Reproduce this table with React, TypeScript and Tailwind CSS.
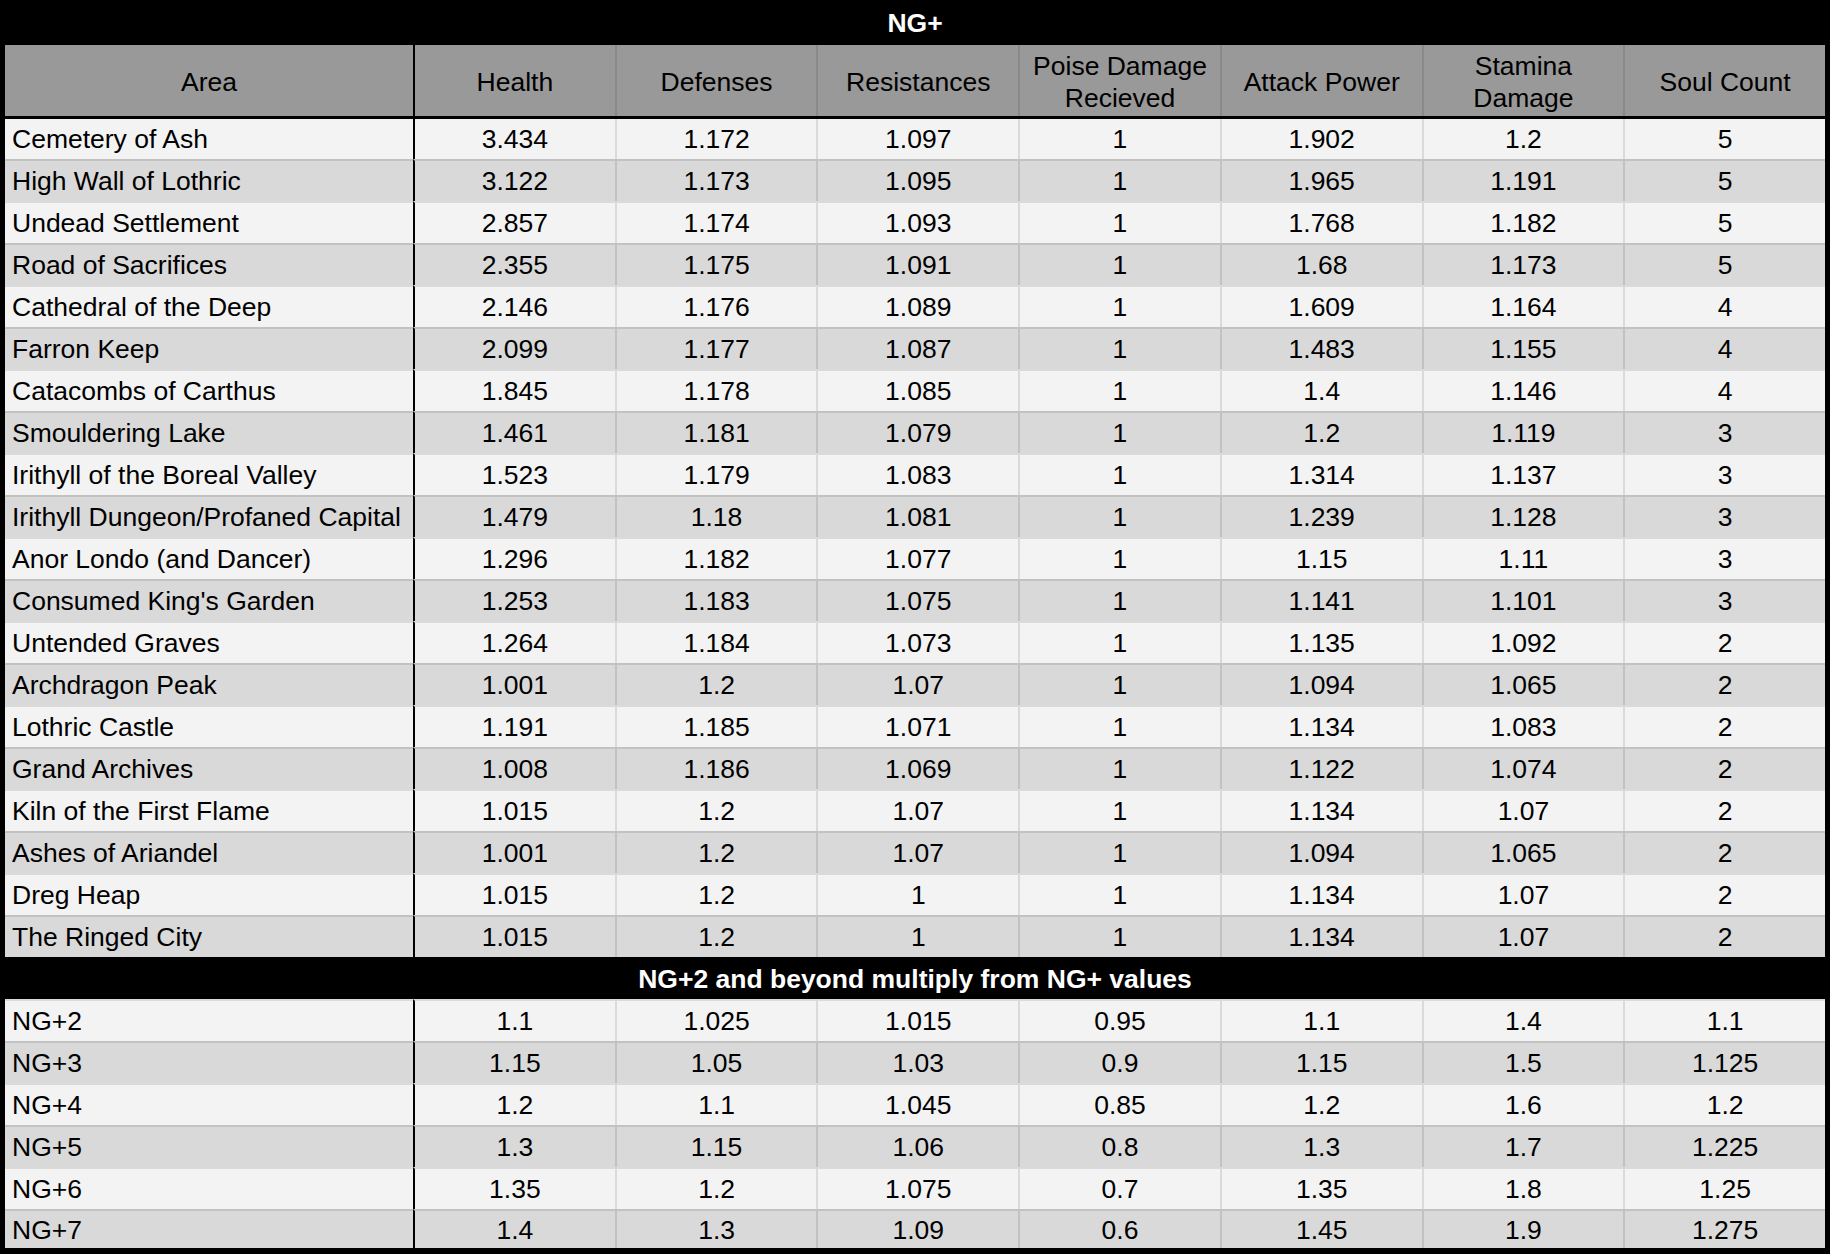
import React from "react";

type Row = [string, string, string, string, string, string, string, string];

const areas: Row[] = [
  ["Cemetery of Ash", "3.434", "1.172", "1.097", "1", "1.902", "1.2", "5"],
  ["High Wall of Lothric", "3.122", "1.173", "1.095", "1", "1.965", "1.191", "5"],
  ["Undead Settlement", "2.857", "1.174", "1.093", "1", "1.768", "1.182", "5"],
  ["Road of Sacrifices", "2.355", "1.175", "1.091", "1", "1.68", "1.173", "5"],
  ["Cathedral of the Deep", "2.146", "1.176", "1.089", "1", "1.609", "1.164", "4"],
  ["Farron Keep", "2.099", "1.177", "1.087", "1", "1.483", "1.155", "4"],
  ["Catacombs of Carthus", "1.845", "1.178", "1.085", "1", "1.4", "1.146", "4"],
  ["Smouldering Lake", "1.461", "1.181", "1.079", "1", "1.2", "1.119", "3"],
  ["Irithyll of the Boreal Valley", "1.523", "1.179", "1.083", "1", "1.314", "1.137", "3"],
  ["Irithyll Dungeon/Profaned Capital", "1.479", "1.18", "1.081", "1", "1.239", "1.128", "3"],
  ["Anor Londo (and Dancer)", "1.296", "1.182", "1.077", "1", "1.15", "1.11", "3"],
  ["Consumed King's Garden", "1.253", "1.183", "1.075", "1", "1.141", "1.101", "3"],
  ["Untended Graves", "1.264", "1.184", "1.073", "1", "1.135", "1.092", "2"],
  ["Archdragon Peak", "1.001", "1.2", "1.07", "1", "1.094", "1.065", "2"],
  ["Lothric Castle", "1.191", "1.185", "1.071", "1", "1.134", "1.083", "2"],
  ["Grand Archives", "1.008", "1.186", "1.069", "1", "1.122", "1.074", "2"],
  ["Kiln of the First Flame", "1.015", "1.2", "1.07", "1", "1.134", "1.07", "2"],
  ["Ashes of Ariandel", "1.001", "1.2", "1.07", "1", "1.094", "1.065", "2"],
  ["Dreg Heap", "1.015", "1.2", "1", "1", "1.134", "1.07", "2"],
  ["The Ringed City", "1.015", "1.2", "1", "1", "1.134", "1.07", "2"],
];

const ngs: Row[] = [
  ["NG+2", "1.1", "1.025", "1.015", "0.95", "1.1", "1.4", "1.1"],
  ["NG+3", "1.15", "1.05", "1.03", "0.9", "1.15", "1.5", "1.125"],
  ["NG+4", "1.2", "1.1", "1.045", "0.85", "1.2", "1.6", "1.2"],
  ["NG+5", "1.3", "1.15", "1.06", "0.8", "1.3", "1.7", "1.225"],
  ["NG+6", "1.35", "1.2", "1.075", "0.7", "1.35", "1.8", "1.25"],
  ["NG+7", "1.4", "1.3", "1.09", "0.6", "1.45", "1.9", "1.275"],
];

const headers = [
  ["Area"],
  ["Health"],
  ["Defenses"],
  ["Resistances"],
  ["Poise Damage", "Recieved"],
  ["Attack Power"],
  ["Stamina", "Damage"],
  ["Soul Count"],
];

function DataRow({
  row,
  dark,
  first,
  last,
}: {
  row: Row;
  dark: boolean;
  first: boolean;
  last?: boolean;
}) {
  return (
    <div
      className={
        "grid grid-cols-[408px_repeat(7,minmax(0,1fr))] " +
        (dark ? "bg-[#d9d9d9]" : "bg-[#f3f3f3]")
      }
    >
      {row.map((v, i) => (
        <div
          key={i}
          className={
            "flex items-center whitespace-nowrap pt-[1px] " +
            (last ? "h-[39px] " : first ? "h-[40px] " : "h-[42px] ") +
            (first ? "" : "border-t-2 border-t-black/10 ") +
            (i === 0
              ? "pl-[7px] "
              : i === 1
              ? "justify-center border-l-2 border-l-black "
              : "justify-center border-l-2 border-l-black/10 ")
          }
        >
          {v}
        </div>
      ))}
    </div>
  );
}

export default function App() {
  return (
    <div
      className="w-[1830px] h-[1254px] overflow-hidden bg-black text-black text-[26.5px] leading-none"
      style={{ fontFamily: '"Liberation Sans", Arial, sans-serif' }}
    >
      <div className="h-[45px] flex items-center justify-center text-white font-bold pt-[2px]">
        NG+
      </div>
      <div className="px-[5px]">
        <div className="grid grid-cols-[408px_repeat(7,minmax(0,1fr))] bg-[#999999] border-b-[3px] border-black">
          {headers.map((h, i) => (
            <div
              key={i}
              className={
                "h-[71px] flex flex-col items-center justify-center text-center leading-[32px] pt-[2px] " +
                (i === 0
                  ? ""
                  : i === 1
                  ? "border-l-2 border-l-black"
                  : "border-l-2 border-l-black/10")
              }
            >
              {h.map((line, j) => (
                <span key={j}>{line}</span>
              ))}
            </div>
          ))}
        </div>
        {areas.map((r, i) => (
          <DataRow key={r[0]} row={r} dark={i % 2 === 1} first={i === 0} />
        ))}
        <div className="h-[42px] bg-black flex items-center justify-center text-white font-bold pt-[2px]">
          NG+2 and beyond multiply from NG+ values
        </div>
        {ngs.map((r, i) => (
          <DataRow
            key={r[0]}
            row={r}
            dark={i % 2 === 1}
            first={false}
            last={i === ngs.length - 1}
          />
        ))}
      </div>
    </div>
  );
}
